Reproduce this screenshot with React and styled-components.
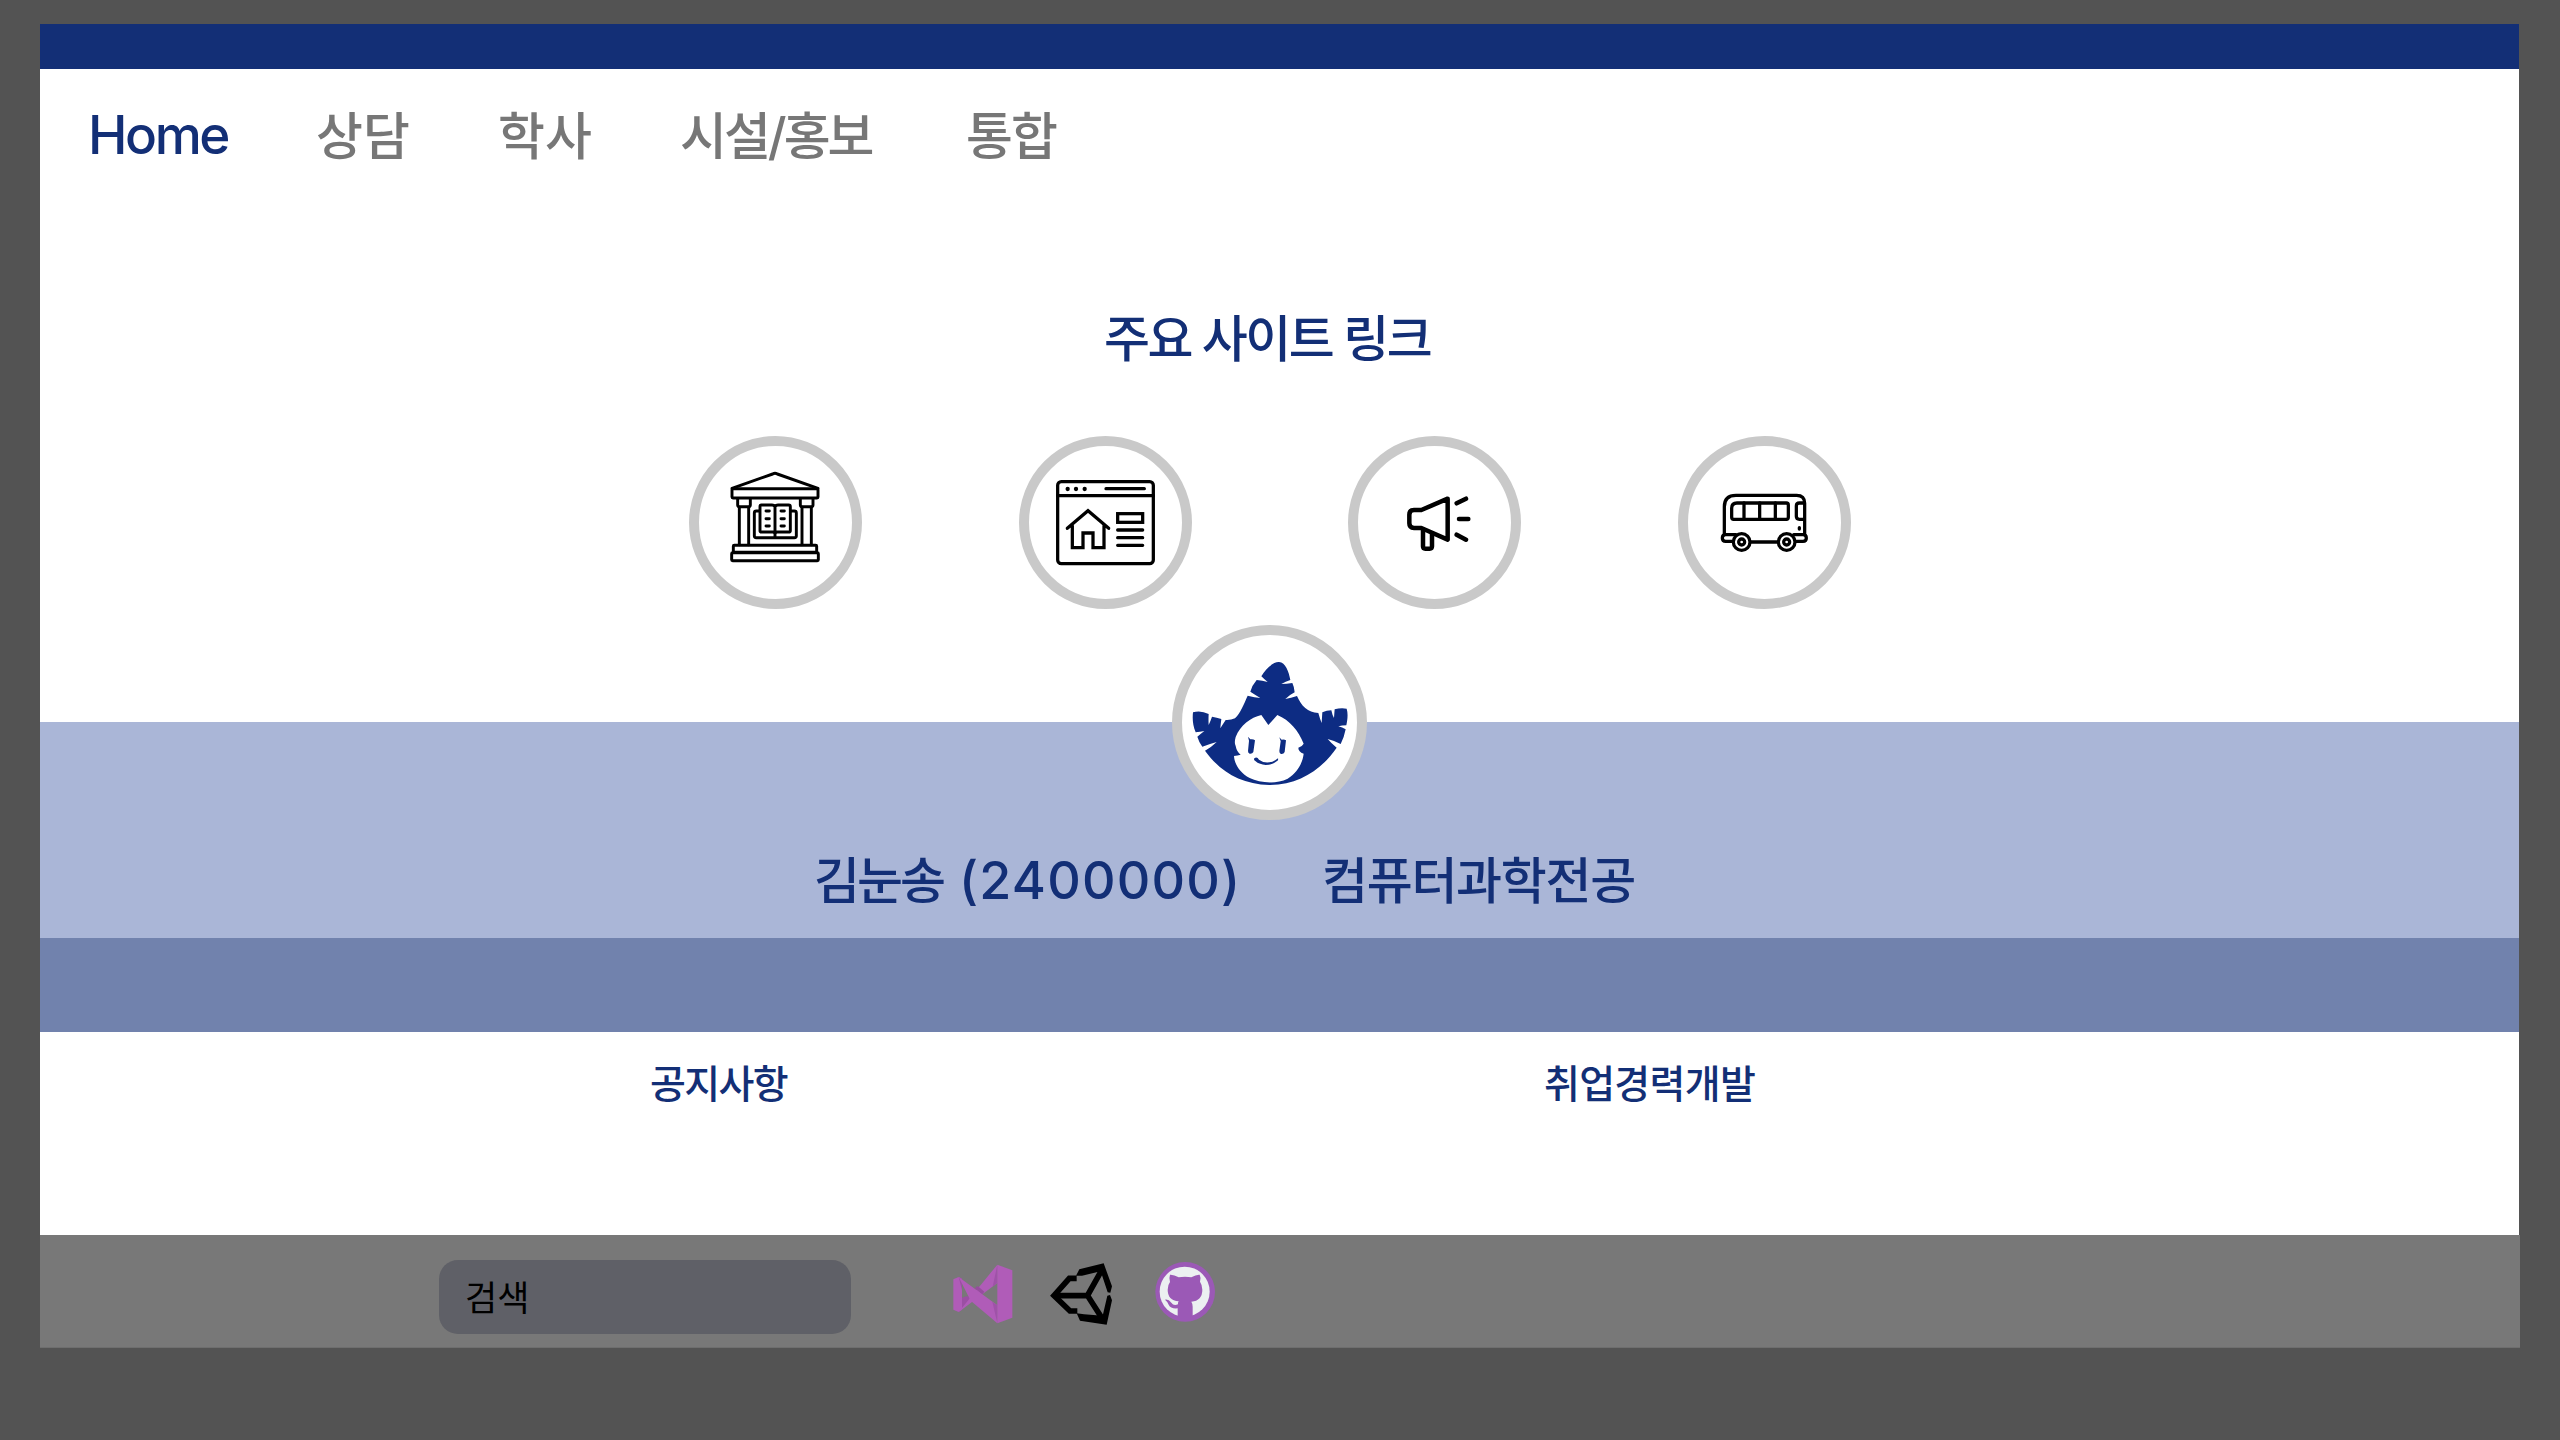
import React from "react";
import styled, { createGlobalStyle } from "styled-components";

const Global = createGlobalStyle`
  * { box-sizing: border-box; }
  body { margin: 0; background: #535353; font-family: "Inter", "Noto Sans CJK KR", sans-serif; }
`;

const Backdrop = styled.div`
  height: 1440px;
  padding: 24px 41px 0 40px;
  overflow: hidden;
`;
const Page = styled.div`
  height: 1324px;
  display: flex;
  flex-direction: column;
  background: #fff;
`;
const TopBar = styled.div`
  height: 45px;
  background: #132f76;
`;
const Label = styled.span`
  display: block;
  white-space: nowrap;
  padding-top: ${(p) => p.$drop || 0}px;
  line-height: 60px;
  font-size: ${(p) => p.$size || 50}px;
  font-weight: ${(p) => p.$weight || 500};
  letter-spacing: ${(p) => p.$track || 0}px;
  color: ${(p) => p.$color || "#132f76"};
`;
const Nav = styled.nav`
  display: grid;
  grid-template-columns: 228px 182px 182px 286px 120px;
  padding: 36px 0 0 48px;
  height: 166px;
`;
const Links = styled.section`
  height: 487px;
  padding: 74px 0 0 649px;
`;
const LinksTitle = styled.h2`
  margin: 0 0 39px 415px;
  height: 88px;
`;
const LinkRow = styled.div`
  display: flex;
  gap: 156.7px;
`;
const Ring = styled.div`
  width: ${(p) => p.$d}px;
  height: ${(p) => p.$d}px;
  flex: none;
  border: 10px solid #c9c9c9;
  border-radius: 50%;
  background: #fff;
  overflow: hidden;
  svg { display: block; width: 100%; height: 100%; }
`;
const Profile = styled.section`
  height: 216px;
  background: #aab6d7;
`;
const Avatar = styled.div`
  margin: -97px 0 0 1132px;
  height: 226px;
`;
const Identity = styled.div`
  display: flex;
  padding-left: 774px;
`;
const Slot = styled.div`
  width: ${(p) => p.$w}px;
  flex: none;
`;
const Band = styled.div`
  height: 94px;
  background: #7182ad;
`;
const Boards = styled.section`
  display: flex;
  height: 203px;
  padding: 22px 0 0 610px;
`;
const Footer = styled.footer`
  display: flex;
  height: 113px;
  margin-right: -1px;
  padding: 25px 0 0 399px;
  border-bottom: 1px solid #6e6e6e;
  background: #787878;
`;
const Search = styled.div`
  width: 412px;
  height: 74px;
  padding: 8px 0 0 26px;
  margin-right: 99px;
  border-radius: 19px;
  background: #5f6067;
`;
const Tools = styled.div`
  display: flex;
  gap: 32px;
  svg { display: block; width: 66px; height: 66px; margin-top: 1px; }
  svg:last-child { margin: -1px 0 0 6px; }
`;

const Library = () => (
  <svg viewBox="59 48 459 459" fill="none" stroke="#000" strokeWidth="8.8" strokeLinejoin="round" strokeLinecap="round">
    <path d="M158 175L280 132Q287 128 294 132L416 175" />
    <rect x="158" y="176" width="258" height="28" rx="3" />
    <path d="M175 207V225Q175 230 180 230H208Q213 230 213 225V207M363 207V225Q363 230 368 230H396Q401 230 401 225V207" />
    <path d="M180 232V344M208 232V344M368 232V344M396 232V344" />
    <rect x="162" y="346" width="250" height="21" rx="3" />
    <rect x="157" y="368" width="260" height="24" rx="3" />
    <path d="M287 230Q284 225 278 225H246Q242 225 242 230V302Q242 306 247 306H280Q287 306 287 312Q287 306 294 306H328Q333 306 333 302V230Q333 225 328 225H296Q290 225 287 230V322" />
    <path d="M240 243H231Q225 243 225 249V318Q225 323 231 323H345Q351 323 351 318V249Q351 243 345 243H336" />
    <path d="M260 243H270M260 266H270M260 288H270M305 243H315M305 266H315M305 288H315" />
  </svg>
);
const HomePage = () => (
  <svg viewBox="57 48 459 459" fill="none" stroke="#000" strokeWidth="9.8" strokeLinejoin="round" strokeLinecap="round">
    <rect x="143" y="155" width="287" height="246" rx="11" />
    <path d="M143 197H430M288 176H403" />
    <path d="M172 295L234 242L296 295M187 287V353H219V309H249V353H282V287" strokeLinejoin="miter" />
    <rect x="323" y="251" width="75" height="26" strokeLinejoin="miter" />
    <path d="M323 300H398M323 323H398M323 346H398" />
    <g fill="#000" stroke="none">
      <circle cx="173" cy="177" r="6.5" />
      <circle cx="198" cy="177" r="6.5" />
      <circle cx="224" cy="177" r="6.5" />
    </g>
  </svg>
);
const Megaphone = () => (
  <svg viewBox="54 48 459 459" fill="none" stroke="#000" strokeWidth="13.5" strokeLinejoin="round" strokeLinecap="round">
    <path d="M323 206L244 240H222Q208 240 208 254V280Q208 294 222 294H244L323 329Z" />
    <path d="M249 298V349Q249 356 256 356H269Q276 356 276 349V311" />
    <path d="M350 220L378 206M357 267H385M350 314L378 329" />
  </svg>
);
const Bus = () => (
  <svg viewBox="54 48 459 459" fill="none" stroke="#000" strokeWidth="9.8" strokeLinejoin="round" strokeLinecap="round">
    <path d="M163 314V230Q163 196 198 196H380Q404 196 404 220V314" />
    <path d="M190 334H167Q157 334 157 324Q157 314 167 314H198M371 314H399Q409 314 409 324Q409 334 399 334H378M242 336H323" />
    <path d="M201 219H349Q355 219 355 225V262Q355 268 349 268H191Q185 268 185 262V235Q185 219 201 219Z" />
    <path d="M222 219V268M269 219V268M316 219V268M402 219H388Q379 219 379 228V259Q379 268 388 268H402" />
    <path d="M388 293V297" />
    <circle cx="215" cy="336" r="25" />
    <circle cx="350" cy="336" r="25" />
    <circle cx="215" cy="336" r="9" />
    <circle cx="350" cy="336" r="9" />
  </svg>
);
const Mascot = () => (
  <svg viewBox="66 75 525 525">
    <path
      fill="#0d2c83"
      d="M304 199C318 175 340 155 357 156C377 158 386 184 391 210Q377 214 364 222Q380 222 397 219Q403 231 404 247Q388 255 376 267Q393 264 411 258C424 288 443 308 475 309Q480 327 485 339Q486 322 487 307Q500 301 514 301Q517 316 522 324Q523 310 524 298Q542 293 560 296C565 312 562 331 559 346Q546 346 535 349Q547 352 557 358Q553 380 542 402Q523 392 503 387Q514 400 530 413C488 475 420 525 328 525C240 523 178 482 135 422Q155 411 170 396Q149 402 127 410Q117 397 112 380Q123 371 133 363Q120 365 107 367C98 346 97 326 99 307Q122 300 146 312Q145 329 146 345Q152 332 156 320Q170 322 184 327Q182 343 181 355Q189 342 197 330Q212 331 225 325C242 309 252 281 263 257Q284 263 301 264Q285 254 271 245Q276 226 290 210Q307 211 323 216Q313 208 304 199Z"
    />
    <path
      fill="#fff"
      d="M304 315L325 345L352 315C389 330 416 363 431 401Q428 408 415 413Q415 425 431 431C428 458 412 489 383 506C347 524 298 518 269 504C239 488 223 461 222 438Q233 436 242 434Q230 425 227 408Q222 399 227 381C241 346 272 322 304 315Z"
    />
    <g fill="#0d2c83">
      <path d="M264 380L271 388Q279 386 285 391L280 426Q277 432 269 431Q264 430 264 423L267 392Z" />
      <path d="M358 382L365 389Q373 387 378 391L374 426Q371 433 363 432Q358 430 358 423L362 394Z" />
      <path d="M283 445Q291 439 297 449Q314 462 337 455Q346 452 354 445Q356 450 350 454Q337 465 317 465Q294 462 286 453Q280 449 283 445Z" />
    </g>
  </svg>
);
const VisualStudio = () => (
  <svg viewBox="30 32 198 198">
    <path fill="#b05cb8" d="M40 87L56 80L66 85V178L56 185L40 178Z" />
    <path fill="#9b4fa3" d="M56 80L66 85V120ZM56 185L66 178V142L82 137L98 151Z" />
    <path fill="#b05cb8" d="M56 185L172 43V98Z" />
    <path fill="#964d9e" d="M104 113L113 107L133 124L126 134Z" />
    <path fill="#b05cb8" d="M56 80L172 165V219L92 151Z" />
    <path fill="#9f52a8" d="M172 43V98L158 109ZM172 219V165L157 154Z" />
    <path fill="#b05cb8" d="M172 43L217 60V202L172 219Z" />
  </svg>
);
const Unity = () => (
  <svg viewBox="324 34 198 198" fill="none" stroke="#000" strokeWidth="17">
    <path d="M348 138H444M440 142L486 60M440 134L490 212" />
    <path d="M410 86H388L342 138L390 184H412" />
    <path fill="#000" stroke="none" d="M408 78L418 59L491 41L516 110L511 129L503 128L482 65L426 78ZM410 191L420 213L500 225L516 152L510 136L502 138L488 198L432 194Z" />
  </svg>
);
const Octocat = () => (
  <svg viewBox="637 26 198 198">
    <circle cx="736.5" cy="124.5" r="89.5" fill="#9b59b6" />
    <circle cx="735" cy="124" r="75" fill="#ecf0f1" />
    <path
      fill="#9b59b6"
      d="M691 73Q702 72 717 81Q736 77 755 81Q770 72 780 73Q785 83 781 94Q788 104 788 118Q788 151 755 154Q759 160 759 169V203H714V174Q693 176 687 163Q684 154 676 148Q687 146 695 157Q702 168 715 162Q714 157 717 153Q684 150 684 118Q684 104 691 95Q687 84 691 73Z"
    />
  </svg>
);

const tabs = [
  { text: "Home", color: "#132f76", size: 53, track: -2.4 },
  { text: "상담", drop: 2 },
  { text: "학사", drop: 2 },
  { text: "시설/홍보", track: -3, drop: 2 },
  { text: "통합", track: -2, drop: 2 },
];
const sites = [Library, HomePage, Megaphone, Bus];

export default function App() {
  return (
    <Backdrop>
      <Global />
      <Page>
        <TopBar />
        <Nav>
          {tabs.map((t) => (
            <Label key={t.text} $size={t.size || 51} $track={t.track} $drop={t.drop} $color={t.color || "#777"}>
              {t.text}
            </Label>
          ))}
        </Nav>
        <Links>
          <LinksTitle>
            <Label $size={50} $track={-2.5}>주요 사이트 링크</Label>
          </LinksTitle>
          <LinkRow>
            {sites.map((Icon, i) => (
              <Ring key={i} $d={173}>
                <Icon />
              </Ring>
            ))}
          </LinkRow>
        </Links>
        <Profile>
          <Avatar>
            <Ring $d={195}>
              <Mascot />
            </Ring>
          </Avatar>
          <Identity>
            <Slot $w={145}>
              <Label $size={50} $track={-3}>김눈송</Label>
            </Slot>
            <Slot $w={363}>
              <Label $size={52} $track={1.2}>(2400000)</Label>
            </Slot>
            <Label $size={50} $track={-1.3}>컴퓨터과학전공</Label>
          </Identity>
        </Profile>
        <Band />
        <Boards>
          <Slot $w={894}>
            <Label $size={39} $track={-1.6}>공지사항</Label>
          </Slot>
          <Label $size={39} $track={-0.7}>취업경력개발</Label>
        </Boards>
        <Footer>
          <Search>
            <Label $size={35} $weight={400} $color="#000">검색</Label>
          </Search>
          <Tools>
            <VisualStudio />
            <Unity />
            <Octocat />
          </Tools>
        </Footer>
      </Page>
    </Backdrop>
  );
}
